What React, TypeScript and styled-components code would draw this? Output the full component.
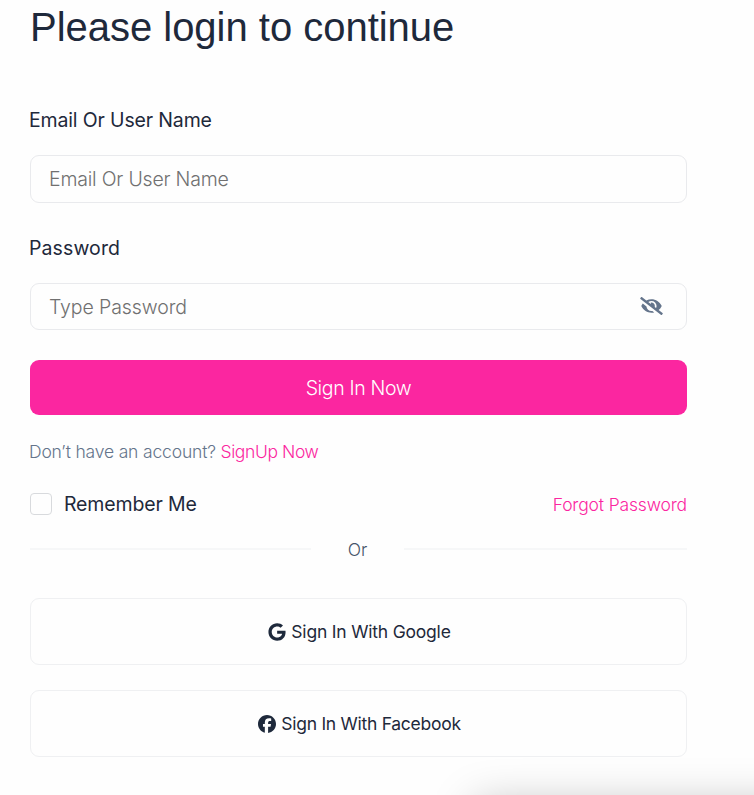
import React from "react";
import styled, { createGlobalStyle } from "styled-components";
import { FaEyeSlash } from "react-icons/fa";
import { FaGoogle, FaFacebook } from "react-icons/fa6";

const GlobalStyle = createGlobalStyle`
  * { box-sizing: border-box; }
  body {
    margin: 0;
    overflow: hidden;
    background: #fefefe;
    color: #1e293b;
    font-family: Inter, "Open Sans", sans-serif;
  }
  button, input { font: inherit; }
`;

const Page = styled.main`
  position: relative;
  height: 795px;
  overflow: hidden;
`;

const Form = styled.form`
  width: 657px;
  margin-left: 30px;
  display: flex;
  flex-direction: column;
`;

const Title = styled.h1`
  margin: 0;
  height: 104px;
  padding-top: 3px;
  font: 400 40px/48px "Liberation Sans", Arial, sans-serif;
  letter-spacing: -0.02px;
  white-space: nowrap;
`;

const Label = styled.label<{ $spacing: number }>`
  height: 51px;
  margin-left: -1px;
  font-size: 19.5px;
  font-weight: 400;
  line-height: 32px;
  letter-spacing: ${(p) => p.$spacing}px;
`;

const Field = styled.div<{ $height: number; $gap: number }>`
  display: flex;
  align-items: center;
  height: ${(p) => p.$height}px;
  margin-bottom: ${(p) => p.$gap}px;
  padding: 0 23px 0 18px;
  border: 1px solid #e9eaed;
  border-radius: 9px;
  color: #64748b;
`;

const Input = styled.input<{ $spacing: number }>`
  flex: 1;
  min-width: 0;
  padding: 0;
  border: 0;
  outline: 0;
  background: transparent;
  font-size: 19.5px;
  font-weight: 300;
  letter-spacing: ${(p) => p.$spacing}px;
  &::placeholder { color: #707070; opacity: 1; }
`;

const EyeToggle = styled(FaEyeSlash)`
  width: 23px;
  height: 18px;
  margin-bottom: 2px;
`;

const SubmitButton = styled.button`
  height: 55px;
  padding: 0;
  border: 0;
  border-radius: 9px;
  background: #fb26a0;
  color: #fff;
  font-size: 19.5px;
  font-weight: 300;
  letter-spacing: -0.35px;
`;

const Signup = styled.p`
  margin: 24px 0 0 -1px;
  height: 54px;
  color: #64748b;
  font-size: 17.5px;
  font-weight: 300;
  line-height: 26px;
  letter-spacing: -0.17px;
  white-space: nowrap;
`;

const Link = styled.a<{ $spacing: number }>`
  color: #fb26a0;
  font-size: 17.5px;
  font-weight: 300;
  letter-spacing: ${(p) => p.$spacing}px;
`;

const Options = styled.div`
  display: flex;
  align-items: center;
  justify-content: space-between;
  height: 22px;
`;

const Remember = styled.label`
  display: flex;
  align-items: center;
  gap: 12px;
  font-size: 19.5px;
  letter-spacing: -0.15px;
`;

const Checkbox = styled.input`
  appearance: none;
  width: 22px;
  height: 22px;
  margin: 0;
  border: 1px solid #d8dadd;
  border-radius: 4px;
`;

const Divider = styled.div`
  display: grid;
  grid-template-columns: 281px 93px 283px;
  align-items: center;
  height: 26px;
  margin: 21px 0 36px;
  color: #475569;
  font-size: 17.5px;
  font-weight: 300;
  text-align: center;
`;

const Rule = styled.span`
  height: 2px;
  background: #f6f7f8;
`;

const SocialButton = styled.button<{ $spacing: number }>`
  display: flex;
  align-items: center;
  justify-content: center;
  gap: 5px;
  height: 67px;
  margin-bottom: 25px;
  padding: 0 0 0 2px;
  border: 1px solid #eff0f2;
  border-radius: 9px;
  background: transparent;
  color: #1e293b;
  font-size: 17.5px;
  font-weight: 400;
  letter-spacing: ${(p) => p.$spacing}px;
  svg { width: 18px; height: 18px; }
`;

const BottomShadow = styled.div`
  position: absolute;
  top: 804px;
  left: 475px;
  width: 400px;
  height: 100px;
  box-shadow: 0 0 44px rgba(0, 0, 0, 0.25);
  pointer-events: none;
`;

export default function App() {
  return (
    <>
      <GlobalStyle />
      <Page>
        <Form onSubmit={(e) => e.preventDefault()}>
          <Title>Please login to continue</Title>
          <Label htmlFor="user" $spacing={-0.15}>Email Or User Name</Label>
          <Field $height={48} $gap={29}>
            <Input id="user" placeholder="Email Or User Name" $spacing={-0.2} />
          </Field>
          <Label htmlFor="password" $spacing={0.1}>Password</Label>
          <Field $height={47} $gap={30}>
            <Input id="password" type="password" placeholder="Type Password" $spacing={-0.1} />
            <EyeToggle />
          </Field>
          <SubmitButton>Sign In Now</SubmitButton>
          <Signup>Don’t have an account? <Link $spacing={-0.4}>SignUp Now</Link></Signup>
          <Options>
            <Remember><Checkbox type="checkbox" />Remember Me</Remember>
            <Link $spacing={-0.15}>Forgot Password</Link>
          </Options>
          <Divider><Rule /><span>Or</span><Rule /></Divider>
          <SocialButton type="button" $spacing={-0.2}><FaGoogle />Sign In With Google</SocialButton>
          <SocialButton type="button" $spacing={-0.27}><FaFacebook />Sign In With Facebook</SocialButton>
        </Form>
        <BottomShadow />
      </Page>
    </>
  );
}
